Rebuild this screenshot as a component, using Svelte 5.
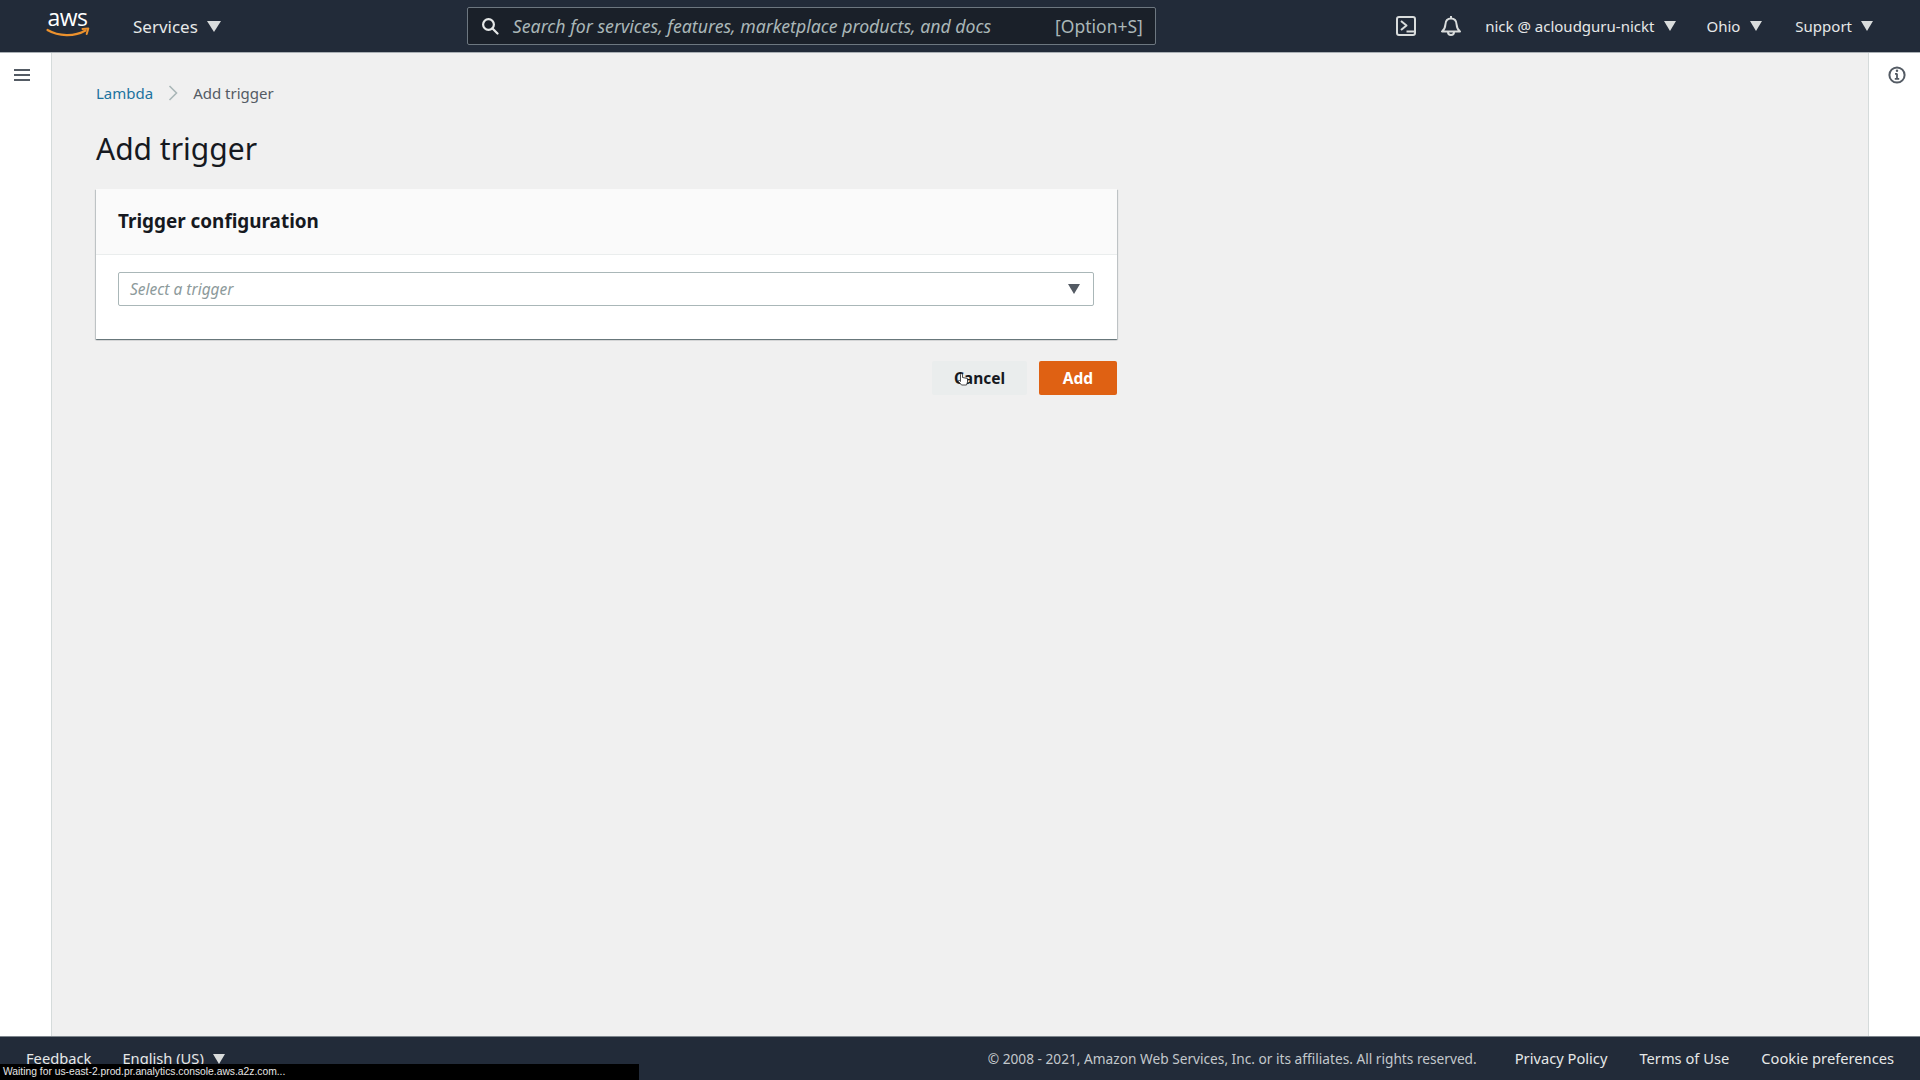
<script>
  const footerLinks = ["Privacy Policy", "Terms of Use", "Cookie preferences"];
</script>

<div class="page">
  <header class="topbar">
    <svg class="logo" width="44" height="40" viewBox="0 0 44 40">
      <text x="21.5" y="20" text-anchor="middle" class="logo-text">aws</text>
      <path d="M1.5 24c11 6.5 27 7 38 .5" fill="none" stroke="#ec912d" stroke-width="2.2" stroke-linecap="round" />
      <path d="M36.5 23l5.8-.6-1.6 5.6" fill="none" stroke="#ec912d" stroke-width="2" stroke-linecap="round" stroke-linejoin="round" />
    </svg>
    <div class="nav-item services">Services <span class="caret big"></span></div>
    <div class="search">
      <svg width="18" height="18" viewBox="0 0 18 18" fill="none" stroke="#e6e8e8" stroke-width="2.2">
        <circle cx="7.5" cy="7.5" r="5.4" />
        <path d="M11.5 11.5l5 5" stroke-linecap="round" />
      </svg>
      <span class="search-text">Search for services, features, marketplace products, and docs</span>
      <span class="shortcut">[Option+S]</span>
    </div>
    <div class="top-right">
      <svg class="ico" width="20" height="20" viewBox="0 0 20 20" fill="none" stroke="#d9dcdc" stroke-width="2">
        <rect x="1" y="1" width="18" height="18" rx="2" />
        <path d="M5 5l5.5 4.5L5 14M10.5 15.5H19" stroke-linejoin="round" />
      </svg>
      <svg class="ico bell" width="20" height="21" viewBox="0 0 20 21" fill="none" stroke="#d9dcdc" stroke-width="2">
        <path d="M1 15.5h18c-2.6-2-3.2-4-3.4-7-.2-3.6-2.4-6-5.6-6s-5.4 2.4-5.6 6c-.2 3-.8 5-3.4 7z" stroke-linejoin="round" />
        <path d="M10 0v2.5M7 16a3 3 0 0 0 6 0" />
      </svg>
      <div class="nav-item account">nick @ acloudguru-nickt <span class="caret"></span></div>
      <div class="nav-item ohio">Ohio <span class="caret"></span></div>
      <div class="nav-item support">Support <span class="caret"></span></div>
    </div>
  </header>

  <div class="body">
    <aside class="rail left">
      <svg width="16" height="14" viewBox="0 0 16 14" fill="none" stroke="#545b64" stroke-width="2">
        <path d="M0 2h16M0 7h16M0 12h16" />
      </svg>
    </aside>

    <main class="content">
      <nav class="crumbs">
        <span class="crumb-link">Lambda</span>
        <svg width="10" height="16" viewBox="0 0 10 16" fill="none" stroke="#aab7b8" stroke-width="1.6">
          <path d="M1.5 1l7 7-7 7" />
        </svg>
        <span>Add trigger</span>
      </nav>
      <h1>Add trigger</h1>

      <section class="card">
        <h2>Trigger configuration</h2>
        <div class="card-body">
          <div class="select">
            <span>Select a trigger</span>
            <span class="select-caret"></span>
          </div>
        </div>
      </section>

      <div class="actions">
        <button class="cancel">Cancel</button>
        <button class="add">Add</button>
        <svg class="cursor" width="10" height="13" viewBox="0 0 10 13">
          <path d="M2.5 1.5v7l-1-1c-.8-.5-1.5.3-1 1l3 3.5h5l1-3v-3.5l-5-1v-3c0-1-2-1-2 0z" fill="#fff" stroke="#222" stroke-width=".8" />
        </svg>
      </div>
    </main>

    <aside class="rail right">
      <svg width="18" height="18" viewBox="0 0 18 18" fill="none" stroke="#545b64" stroke-width="2">
        <circle cx="9" cy="9" r="7.6" />
        <path d="M9 7.6v5M6.8 12.8h4.4M7 7.8h2" stroke-width="1.8" />
        <circle cx="9" cy="4.8" r="1.2" fill="#545b64" stroke="none" />
      </svg>
    </aside>
  </div>

  <footer class="footer">
    <div class="foot-left">
      <span>Feedback</span>
      <span class="lang">English (US) <span class="caret small"></span></span>
    </div>
    <div class="foot-right">
      <span class="copyright">© 2008 - 2021, Amazon Web Services, Inc. or its affiliates. All rights reserved.</span>
      {#each footerLinks as link}
        <span>{link}</span>
      {/each}
    </div>
    <div class="status">Waiting for us-east-2.prod.pr.analytics.console.aws.a2z.com...</div>
  </footer>
</div>

<style>
  :global(body) {
    margin: 0;
  }

  .page {
    display: flex;
    flex-direction: column;
    width: 1920px;
    height: 1080px;
    overflow: hidden;
    background: #f0f0f0;
    font-family: "Noto Sans", "Liberation Sans", sans-serif;
    color: #16191f;
  }

  .topbar {
    display: flex;
    align-items: center;
    flex: none;
    height: 52px;
    padding: 0 47px 0 46px;
    background: #222b39;
    border-bottom: 1px solid #aab0b5;
    color: #e6e8e8;
    font-size: 15px;
  }

  .logo {
    overflow: visible;
  }

  .logo-text {
    font-family: "Open Sans", sans-serif;
    font-size: 23px;
    fill: #fff;
    letter-spacing: -0.5px;
  }

  .nav-item {
    display: flex;
    align-items: center;
    gap: 10px;
    white-space: nowrap;
  }

  .services {
    margin-left: 43px;
    font-size: 17px;
    gap: 9px;
  }

  .caret {
    width: 0;
    height: 0;
    border-left: 6px solid transparent;
    border-right: 6px solid transparent;
    border-top: 10px solid #d9dcdc;
  }

  .caret.big {
    border-left-width: 7px;
    border-right-width: 7px;
    border-top-width: 11px;
  }

  .caret.small {
    display: inline-block;
    margin-left: 5px;
  }

  .search {
    display: flex;
    align-items: center;
    box-sizing: border-box;
    width: 689px;
    height: 38px;
    margin-left: 246px;
    padding: 0 12px 0 13px;
    background: #1a2029;
    border: 1px solid #6d7780;
    border-radius: 2px;
  }

  .search-text {
    flex: 1;
    margin-left: 14px;
    font-style: italic;
    color: #aab7b8;
    font-size: 17.7px;
    white-space: nowrap;
  }

  .shortcut {
    color: #aab7b8;
    font-size: 17.5px;
  }

  .top-right {
    display: flex;
    align-items: center;
    margin-left: auto;
  }

  .bell {
    margin-left: 25px;
  }

  .account {
    margin-left: 24px;
    font-size: 15px;
  }

  .ohio {
    margin-left: 30px;
  }

  .support {
    margin-left: 33px;
    gap: 9px;
  }

  .body {
    display: flex;
    flex: 1;
    min-height: 0;
  }

  .rail {
    flex: none;
    box-sizing: border-box;
    display: flex;
    justify-content: center;
    background: #fff;
    padding-top: 15px;
  }

  .rail.left {
    width: 52px;
    padding-right: 8px;
    border-right: 1px solid #d5dbdb;
  }

  .rail.right {
    width: 52px;
    padding-left: 5px;
    padding-top: 13px;
    border-left: 1px solid #d5dbdb;
  }

  .content {
    flex: 1;
    padding: 29px 44px 0;
  }

  .crumbs {
    display: flex;
    align-items: center;
    gap: 15px;
    height: 22px;
    font-size: 15px;
    color: #545b64;
  }

  .crumb-link {
    color: #1c739f;
  }

  h1 {
    margin: 22px 0 0;
    font-size: 30px;
    line-height: 46px;
    font-weight: 400;
    color: #16191f;
  }

  .card {
    width: 1021px;
    margin-top: 17px;
    background: #fff;
    box-shadow: 0 1px 1px 0 rgba(0, 28, 36, 0.4), 1px 1px 1px 0 rgba(0, 28, 36, 0.15), -1px 1px 1px 0 rgba(0, 28, 36, 0.15);
  }

  h2 {
    margin: 0;
    box-sizing: border-box;
    height: 66px;
    padding: 0 22px;
    font-size: 18.9px;
    line-height: 65px;
    font-weight: 700;
    background: #fafafa;
    border-bottom: 1px solid #eaeded;
  }

  .card-body {
    padding: 17px 23px 33px 22px;
  }

  .select {
    display: flex;
    align-items: center;
    justify-content: space-between;
    box-sizing: border-box;
    height: 34px;
    padding: 0 13px 0 11px;
    border: 1px solid #aab7b8;
    border-radius: 2px;
    font-size: 15.5px;
    font-style: italic;
    color: #8d9a9b;
  }

  .select-caret {
    width: 0;
    height: 0;
    border-left: 6.5px solid transparent;
    border-right: 6.5px solid transparent;
    border-top: 10px solid #545b64;
  }

  .actions {
    position: relative;
    display: flex;
    justify-content: flex-end;
    gap: 12px;
    width: 1021px;
    margin-top: 22px;
  }

  button {
    height: 34px;
    border: 0;
    border-radius: 2px;
    font-family: inherit;
    font-size: 15.5px;
    font-weight: 700;
    padding: 0;
  }

  .cancel {
    width: 95px;
    background: #eaeded;
    color: #16191f;
  }

  .add {
    width: 78px;
    background: #df6113;
    color: #fff;
  }

  .cursor {
    position: absolute;
    left: 862px;
    top: 12px;
  }

  .footer {
    position: relative;
    display: flex;
    justify-content: space-between;
    flex: none;
    height: 43px;
    background: #222b39;
    border-top: 1px solid #7d858c;
    color: #e6e8e8;
    font-size: 14.7px;
    line-height: 43px;
    padding: 0 26px;
  }

  .foot-left {
    display: flex;
    gap: 31px;
  }

  .foot-right {
    display: flex;
    gap: 32px;
    white-space: nowrap;
  }

  .copyright {
    color: #c3c8cc;
    font-size: 13.7px;
    margin-right: 6px;
  }

  .status {
    position: absolute;
    left: 0;
    bottom: 0;
    width: 636px;
    height: 16px;
    padding-left: 3px;
    background: #000;
    color: #e6e6e6;
    font-family: "Liberation Sans", sans-serif;
    font-size: 10.3px;
    line-height: 16px;
  }
</style>
